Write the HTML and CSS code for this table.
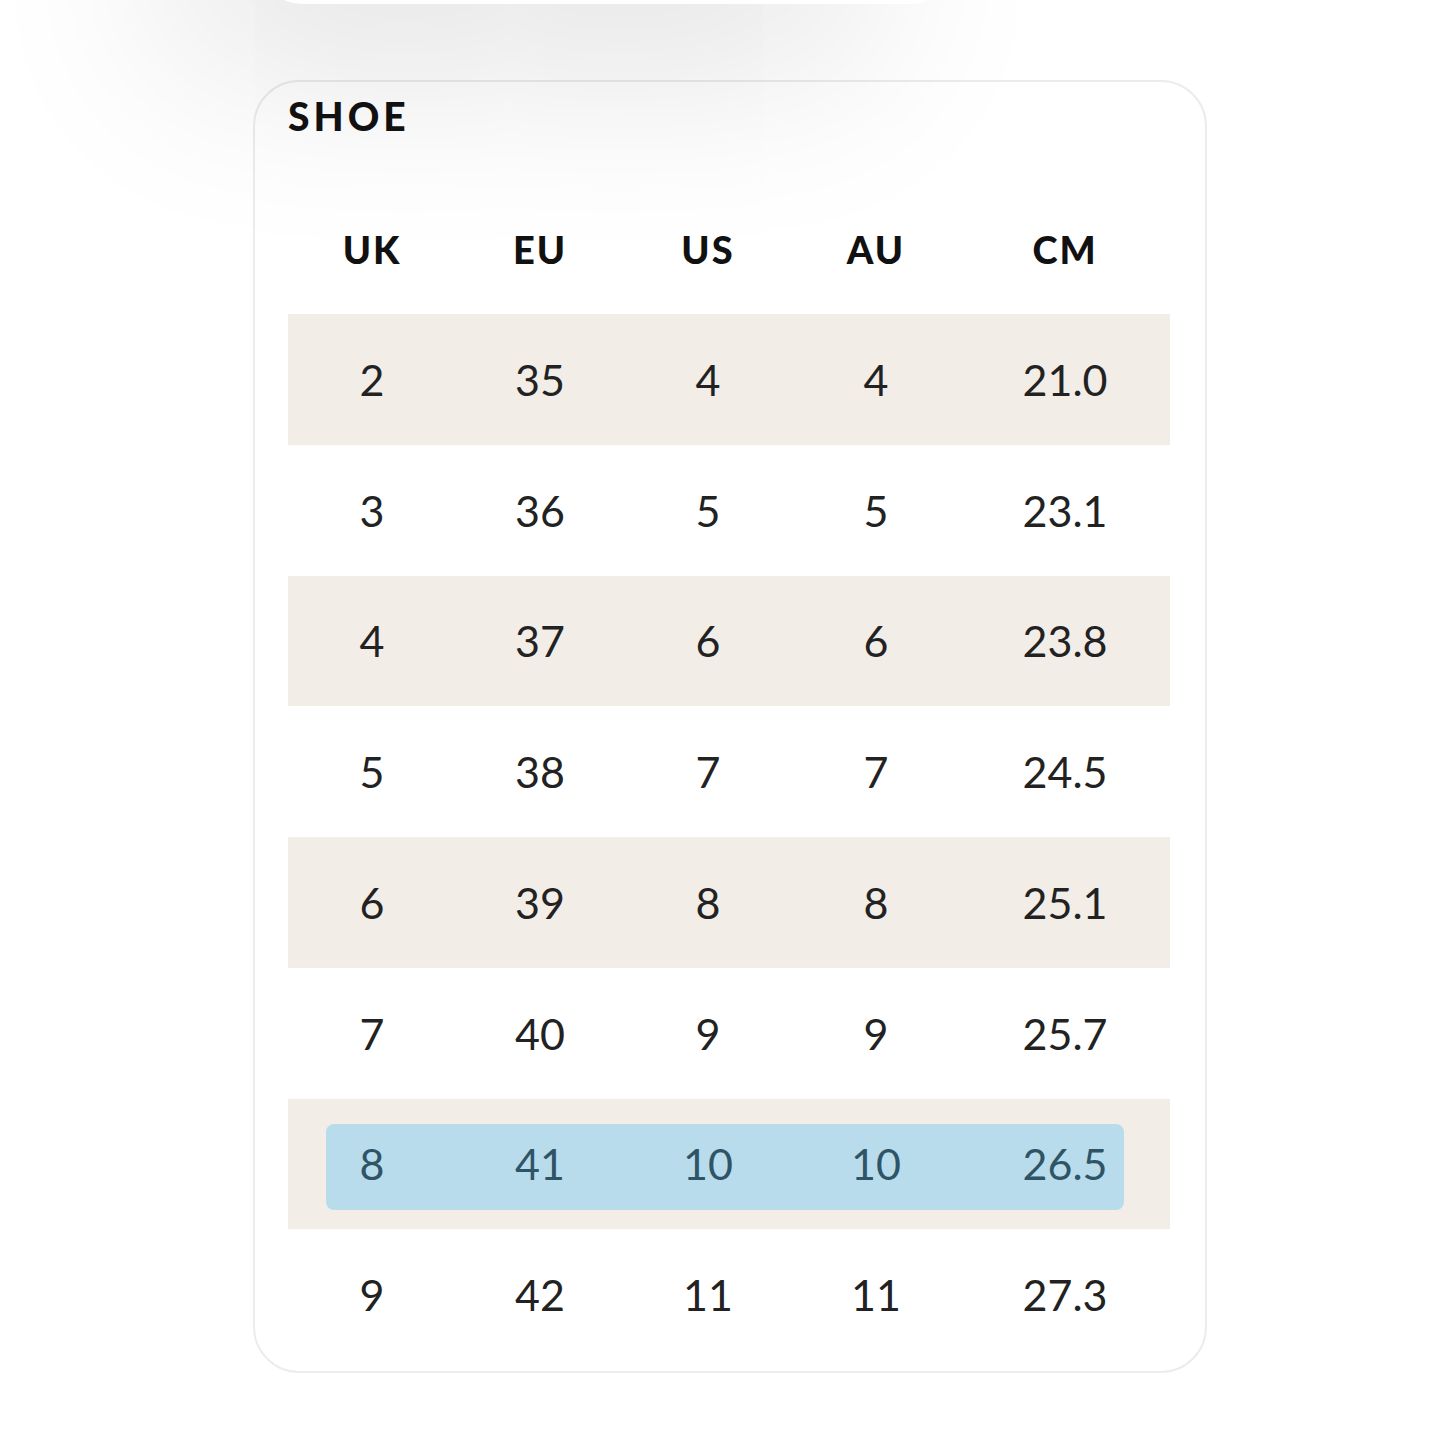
FILE: index.html
```html
<!DOCTYPE html>
<html>
<head>
<meta charset="utf-8">
<link rel="stylesheet" href="styles.css">
</head>
<body>
<div class="top-sheet"></div>
<div class="card">
  <div class="title">SHOE</div>
  <div class="table">
    <div class="row head"><div>UK</div><div>EU</div><div>US</div><div>AU</div><div>CM</div></div>
    <div class="row alt"><div>2</div><div>35</div><div>4</div><div>4</div><div>21.0</div></div>
    <div class="row"><div>3</div><div>36</div><div>5</div><div>5</div><div>23.1</div></div>
    <div class="row alt"><div>4</div><div>37</div><div>6</div><div>6</div><div>23.8</div></div>
    <div class="row"><div>5</div><div>38</div><div>7</div><div>7</div><div>24.5</div></div>
    <div class="row alt"><div>6</div><div>39</div><div>8</div><div>8</div><div>25.1</div></div>
    <div class="row"><div>7</div><div>40</div><div>9</div><div>9</div><div>25.7</div></div>
    <div class="row alt selected"><div>8</div><div>41</div><div>10</div><div>10</div><div>26.5</div></div>
    <div class="row"><div>9</div><div>42</div><div>11</div><div>11</div><div>27.3</div></div>
  </div>
</div>
</body>
</html>
```

FILE: styles.css
```css
html, body {
  margin: 0;
  padding: 0;
  background: #ffffff;
}
body {
  width: 1440px;
  height: 1440px;
  position: relative;
  overflow: hidden;
  font-family: "Lato", "Noto Sans", sans-serif;
  color: #222222;
}
.top-sheet {
  position: absolute;
  left: 262px;
  top: -300px;
  width: 690px;
  height: 304px;
  border-radius: 40px;
  background: #ffffff;
  box-shadow: -90px 60px 200px rgba(0, 0, 0, 0.12);
  z-index: 2;
}
.card {
  margin: 80px 0 0 253px;
  width: 954px;
  box-sizing: border-box;
  border: 2px solid #ececec;
  border-radius: 46px;
  background: #ffffff;
  padding: 12px 35px 11px 33px;
  position: relative;
}
.title {
  font-weight: 900;
  font-size: 39px;
  letter-spacing: 4px;
  line-height: 45px;
  color: #111111;
  position: relative;
  z-index: 3;
}
.table {
  margin-top: 87px;
}
.row {
  display: grid;
  grid-template-columns: 168px 168px 168px 168px 210px;
  height: 130.75px;
  align-items: center;
  text-align: center;
  font-size: 43px;
  font-weight: 400;
  position: relative;
}
.row > div {
  position: relative;
  z-index: 1;
}
.row.head {
  height: 88px;
  align-items: start;
  font-weight: 900;
  font-size: 38px;
  letter-spacing: 2px;
  color: #111111;
}
.row.alt {
  background: #f2ede7;
}
.row.selected {
  color: #2e5466;
}
.row.selected::before {
  content: "";
  position: absolute;
  left: 38px;
  right: 46px;
  top: 25px;
  bottom: 19px;
  background: #b9dcec;
  border-radius: 8px;
}
```
